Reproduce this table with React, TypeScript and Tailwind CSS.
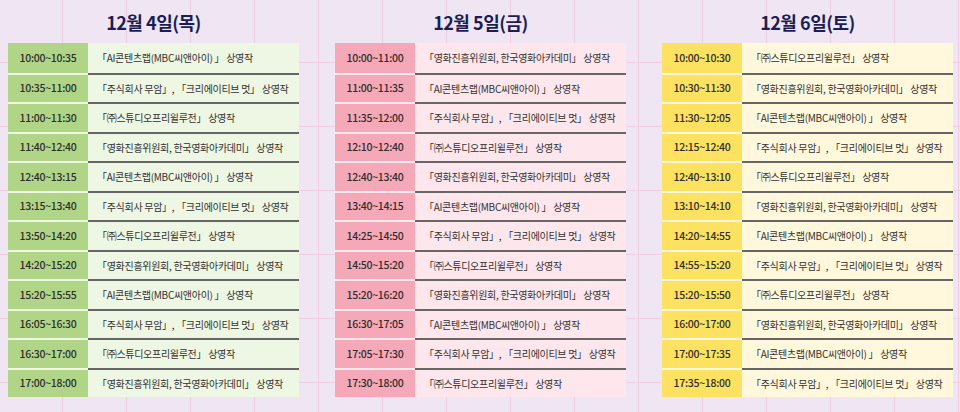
import React from 'react';

type Theme = {
  time: string;
  body: string;
  gap: string;
};

const AI = '「AI콘텐츠랩(MBC씨앤아이) 」 상영작';
const JS = '「주식회사 무암」, 「크리에이티브 멋」 상영작';
const ST = '「㈜스튜디오프리윌루전」 상영작';
const YH = '「영화진흥위원회, 한국영화아카데미」 상영작';

const THEMES: Record<string, Theme> = {
  green: { time: 'bg-[#b0d587]', body: 'bg-[#eef6e4]', gap: 'border-[#eef7e4]' },
  pink: { time: 'bg-[#f5a9b8]', body: 'bg-[#fde7ec]', gap: 'border-[#fde9ee]' },
  yellow: { time: 'bg-[#fde160]', body: 'bg-[#fff8dd]', gap: 'border-[#fff8e0]' },
};

const DAYS: { title: string; theme: string; rows: [string, string][] }[] = [
  {
    title: '12월 4일(목)',
    theme: 'green',
    rows: [
      ['10:00~10:35', AI],
      ['10:35~11:00', JS],
      ['11:00~11:30', ST],
      ['11:40~12:40', YH],
      ['12:40~13:15', AI],
      ['13:15~13:40', JS],
      ['13:50~14:20', ST],
      ['14:20~15:20', YH],
      ['15:20~15:55', AI],
      ['16:05~16:30', JS],
      ['16:30~17:00', ST],
      ['17:00~18:00', YH],
    ],
  },
  {
    title: '12월 5일(금)',
    theme: 'pink',
    rows: [
      ['10:00~11:00', YH],
      ['11:00~11:35', AI],
      ['11:35~12:00', JS],
      ['12:10~12:40', ST],
      ['12:40~13:40', YH],
      ['13:40~14:15', AI],
      ['14:25~14:50', JS],
      ['14:50~15:20', ST],
      ['15:20~16:20', YH],
      ['16:30~17:05', AI],
      ['17:05~17:30', JS],
      ['17:30~18:00', ST],
    ],
  },
  {
    title: '12월 6일(토)',
    theme: 'yellow',
    rows: [
      ['10:00~10:30', ST],
      ['10:30~11:30', YH],
      ['11:30~12:05', AI],
      ['12:15~12:40', JS],
      ['12:40~13:10', ST],
      ['13:10~14:10', YH],
      ['14:20~14:55', AI],
      ['14:55~15:20', JS],
      ['15:20~15:50', ST],
      ['16:00~17:00', YH],
      ['17:00~17:35', AI],
      ['17:35~18:00', JS],
    ],
  },
];

export default function App() {
  return (
    <div
      className="w-[960px] h-[412px] overflow-hidden bg-[#f0e6f3] bg-[linear-gradient(to_right,#efcde2_1px,transparent_1px),linear-gradient(to_bottom,#efcde2_1px,transparent_1px)] bg-[size:64px_64px] bg-[position:62px_62px] flex gap-[36px] pl-[8px] font-['Noto_Sans_CJK_KR','Noto_Sans',sans-serif]"
    >
      {DAYS.map((d) => (
        <DayColumn key={d.title} title={d.title} theme={THEMES[d.theme]} rows={d.rows} />
      ))}
    </div>
  );
}

function DayColumn({ title, theme, rows }: { title: string; theme: Theme; rows: [string, string][] }) {
  return (
    <div className="w-[291px] flex flex-col">
      <div className="h-[43px] flex items-center justify-center pt-[1px]">
        <h2 className="text-[18px] font-bold tracking-[-0.5px] text-[#1b1e55]">{title}</h2>
      </div>
      <div className="flex flex-col">
        {rows.map(([time, label], i) => (
          <div key={time} className="flex h-[29.5px]">
            <div
              className={[
                'w-[80px] shrink-0 flex items-center justify-center text-[10.5px] font-medium tracking-[-0.3px] text-[#2e2e2e]',
                theme.time,
                i > 0 ? `border-t-2 ${theme.gap}` : '',
              ].join(' ')}
            >
              {time}
            </div>
            <div
              className={[
                'flex-1 flex items-center pl-[9px] text-[10px] tracking-[-0.3px] text-[#333] whitespace-nowrap',
                theme.body,
                i > 0 ? 'border-t-2 border-[#666]' : '',
              ].join(' ')}
            >
              {label}
            </div>
          </div>
        ))}
      </div>
    </div>
  );
}
